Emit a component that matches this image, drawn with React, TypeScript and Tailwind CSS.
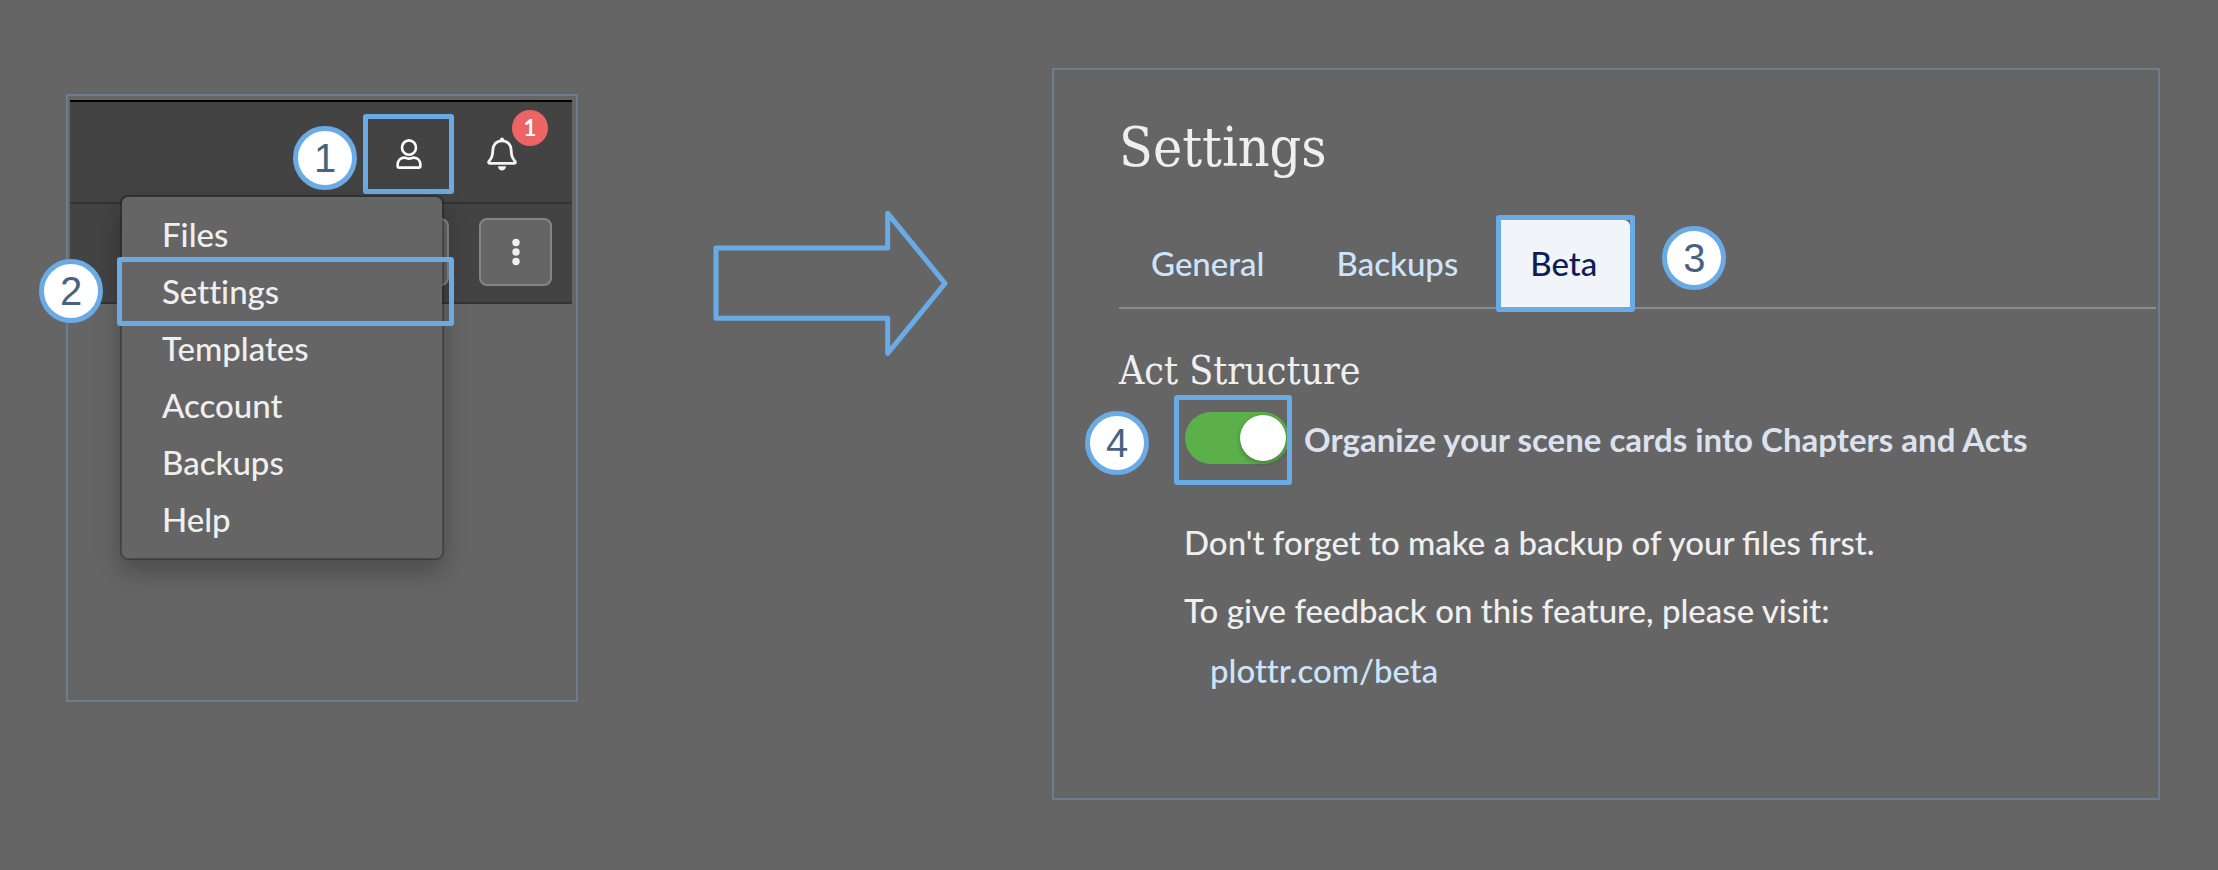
import { useState } from "react";

const menuItems = ["Files", "Settings", "Templates", "Account", "Backups", "Help"];
const serif = "font-['DejaVu_Serif_Condensed','DejaVu_Serif',serif]";

function Step({ n, className }: { n: number; className: string }) {
  return (
    <span
      className={`absolute z-20 flex h-16 w-16 items-center justify-center rounded-full border-[5px] border-[#6aabe5] bg-white font-['Liberation_Sans',sans-serif] text-[40px] leading-none text-[#48637f] ${className}`}
    >
      {n}
    </span>
  );
}

function UserIcon() {
  return (
    <svg width="26" height="30" viewBox="0 0 26 30" fill="none" stroke="#fff" strokeWidth="2.6" strokeLinejoin="round" aria-hidden="true">
      <ellipse cx="13" cy="8.6" rx="7" ry="7.2" />
      <path d="M8.2 18.6C4 18.6 1.6 21.8 1.6 26v.9c0 1 .7 1.7 1.7 1.7h19.4c1 0 1.7-.7 1.7-1.7V26c0-4.200-2.400-7.400-6.600-7.400-1.600 0-2.300 1-4.800 1s-3.200-1-4.800-1z" />
    </svg>
  );
}

function BellIcon() {
  return (
    <svg width="30" height="34" viewBox="0 0 30 34" fill="none" aria-hidden="true">
      <path
        d="M15 3.800c-5.600 0-9.200 4-9.200 9.500 0 7.200-2.300 9.300-3.700 10.900-.9 1.100-.4 2.200.9 2.200h24c1.300 0 1.800-1.100.9-2.200-1.400-1.600-3.700-3.700-3.700-10.900 0-5.500-3.600-9.500-9.200-9.500z"
        stroke="#f4f4f6"
        strokeWidth="2.800"
        strokeLinejoin="round"
      />
      <path d="M13 4V2.500a2 2 0 0 1 4 0V4zM11 29.200h8c0 2.600-1.800 4.300-4 4.300s-4-1.700-4-4.300z" fill="#f4f4f6" />
    </svg>
  );
}

function MenuPanel() {
  return (
    <section className="relative mt-[94px] min-h-[608px] w-[512px] shrink-0 border-2 border-[#6e7d8d] pt-1 pr-1 pl-0.5">
      <header className="bg-[#434343]">
        <div className="flex h-[104px] items-center justify-end gap-[18px] border-t-2 border-b-2 border-t-black border-b-[#333] pt-1 pr-10">
          <div className="relative">
            <Step n={1} className="top-3 right-[97px]" />
            <button aria-label="Account menu" className="flex h-20 w-[91px] items-center justify-center rounded-[3px] border-[5px] border-[#6aabe5]">
              <UserIcon />
            </button>
          </div>
          <button aria-label="Notifications" className="relative flex h-[60px] w-[60px] items-center justify-center">
            <BellIcon />
            <span className="absolute -top-[14px] -right-4 flex h-9 w-9 items-center justify-center rounded-full bg-[#ed6464] text-[22px] leading-none font-bold text-white">
              1
            </span>
          </button>
        </div>
        <div className="flex h-[100px] items-start justify-end gap-[30px] border-b-2 border-[#333] pt-[14px] pr-5">
          <button aria-label="View" className="h-[68px] w-[73px] rounded-lg border-2 border-[#858585] bg-[#656565]" />
          <button aria-label="More" className="flex h-[68px] w-[73px] items-center justify-center rounded-lg border-2 border-[#858585] bg-[#656565]">
            <svg width="8" height="28" viewBox="0 0 8 28" fill="#efefef" aria-hidden="true">
              <circle cx="4" cy="4.500" r="3.700" />
              <circle cx="4" cy="14" r="3.700" />
              <circle cx="4" cy="23.500" r="3.700" />
            </svg>
          </button>
        </div>
      </header>
      <nav className="absolute top-[99px] left-[52px] w-[324px] rounded-lg border-2 border-black/25 bg-[#656565] bg-clip-padding pt-[9px] pb-[10px] shadow-[0_12px_24px_rgba(0,0,0,0.25)]">
        <ul>
          {menuItems.map((item) => (
            <li key={item} className="relative">
              <a href="#" className="block px-10 text-[33px] leading-[57px] font-medium text-[#efefef] [font-variant-ligatures:none]">
                {item}
              </a>
              {item === "Settings" && (
                <>
                  <span className="absolute -inset-y-[6px] -right-3 -left-[5px] rounded-[3px] border-[5px] border-[#6aabe5]" />
                  <Step n={2} className="-top-1 -left-[83px]" />
                </>
              )}
            </li>
          ))}
        </ul>
      </nav>
    </section>
  );
}

function SettingsPanel() {
  const [on, setOn] = useState(true);
  return (
    <section className="mt-[68px] min-h-[732px] min-w-0 flex-1 border-2 border-[#6e7d8d] pt-[45px] pr-0.5 pl-[65px]">
      <h1 className={`${serif} text-[55px] leading-[64px] text-[#efefef]`}>Settings</h1>
      <div role="tablist" className="mt-9 flex h-[94px] items-start border-b-2 border-[#8d8d8d] text-[33px] font-medium text-[#cde4fc]">
        <button role="tab" aria-selected="false" className="h-[97px] px-8">General</button>
        <button role="tab" aria-selected="false" className="ml-2 h-[97px] px-8">Backups</button>
        <div className="relative ml-[6px]">
          <button role="tab" aria-selected="true" className="h-[97px] w-[139px] rounded-[3px] border-[5px] border-[#6aabe5] text-[#0b1f56]">
            <span className="flex h-full items-center rounded-tr-md bg-[#f1f5f9] pl-[29px]">Beta</span>
          </button>
          <Step n={3} className="top-[11px] left-[166px]" />
        </div>
      </div>
      <h2 className={`${serif} mt-[38px] text-[39px] leading-[48px] text-[#efefef]`}>Act Structure</h2>
      <div className="relative ml-[55px] flex items-center">
        <Step n={4} className="top-4 -left-[89px]" />
        <span className="relative flex h-[90px] w-[118px] shrink-0 items-center pb-[4px] pl-[11px] after:pointer-events-none after:absolute after:inset-0 after:rounded-[3px] after:border-[5px] after:border-[#6aabe5] after:content-['']">
          <input
            id="act-structure"
            type="checkbox"
            role="switch"
            checked={on}
            onChange={() => setOn(!on)}
            className="relative h-[52px] w-[104px] appearance-none rounded-full bg-[#999] before:absolute before:top-[3px] before:left-[3px] before:h-[46px] before:w-[46px] before:rounded-full before:bg-white before:shadow-[0_2px_5px_rgba(0,0,0,0.3)] before:content-[''] checked:bg-[#5cb04a] checked:before:left-[55px]"
          />
        </span>
        <label htmlFor="act-structure" className="pb-0.5 pl-3 text-[33px] leading-[48px] font-bold text-[#dbe2ee]">
          Organize your scene cards into Chapters and Acts
        </label>
      </div>
      <div className="mt-[33px] pl-[65px] text-[33px] leading-[48px] font-medium text-[#efefef]">
        <p>Don't forget to make a backup of your files first.</p>
        <p className="mt-5">To give feedback on this feature, please visit:</p>
        <p className="mt-3 pl-[26px]">
          <a href="#" className="text-[#cde4fc] [font-variant-ligatures:none]">plottr.com/beta</a>
        </p>
      </div>
    </section>
  );
}

export default function App() {
  return (
    <main className="flex min-h-screen items-start bg-[#656565] pr-[58px] pb-[70px] pl-[66px] font-['Lato',sans-serif]">
      <MenuPanel />
      <svg className="mt-[210px] mr-[103px] ml-[135px] shrink-0" width="236" height="147" viewBox="713 210 236 147" fill="none" stroke="#6aabe5" strokeWidth="5" strokeLinejoin="round" aria-hidden="true">
        <path d="M716 248H887.700V213.300L945 283.300L887.700 353.300V318.300H716Z" />
      </svg>
      <SettingsPanel />
    </main>
  );
}
